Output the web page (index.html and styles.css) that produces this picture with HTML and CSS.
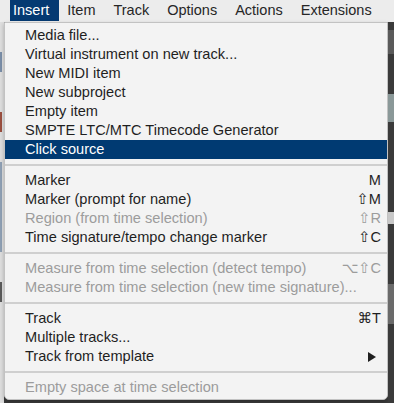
FILE: index.html
```html
<!DOCTYPE html>
<html lang="en">
	<head>
		<meta charset="UTF-8" />
		<meta name="viewport" content="width=device-width, initial-scale=1.0" />
		<title>Insert menu</title>
		<link rel="stylesheet" href="styles.css">
	</head>
	<body>
		<div class="menubar">
			<a href="javascript:;" class="top current-top">Insert</a>
			<a href="javascript:;" class="top">Item</a>
			<a href="javascript:;" class="top">Track</a>
			<a href="javascript:;" class="top">Options</a>
			<a href="javascript:;" class="top">Actions</a>
			<a href="javascript:;" class="top">Extensions</a>
		</div>

		<div class="stage">
			<div class="edge-left">
				<span class="tile t1"></span>
				<span class="tile t2"></span>
				<span class="tile t3"></span>
				<span class="tile t4"></span>
			</div>

			<ul class="menu">
				<li class="item"><span class="label">Media file...</span></li>
				<li class="item"><span class="label">Virtual instrument on new track...</span></li>
				<li class="item"><span class="label">New MIDI item</span></li>
				<li class="item"><span class="label">New subproject</span></li>
				<li class="item"><span class="label">Empty item</span></li>
				<li class="item"><span class="label">SMPTE LTC/MTC Timecode Generator</span></li>
				<li class="item selected"><span class="label">Click source</span></li>
				<li class="sep"></li>
				<li class="item"><span class="label">Marker</span><span class="key">M</span></li>
				<li class="item"><span class="label">Marker (prompt for name)</span><span class="key">⇧M</span></li>
				<li class="item disabled"><span class="label">Region (from time selection)</span><span class="key">⇧R</span></li>
				<li class="item"><span class="label">Time signature/tempo change marker</span><span class="key">⇧C</span></li>
				<li class="sep"></li>
				<li class="item disabled"><span class="label">Measure from time selection (detect tempo)</span><span class="key">⌥⇧C</span></li>
				<li class="item disabled"><span class="label">Measure from time selection (new time signature)...</span></li>
				<li class="sep"></li>
				<li class="item"><span class="label">Track</span><span class="key">⌘T</span></li>
				<li class="item"><span class="label">Multiple tracks...</span></li>
				<li class="item"><span class="label">Track from template</span><span class="arrow"></span></li>
				<li class="sep"></li>
				<li class="item disabled"><span class="label">Empty space at time selection</span></li>
			</ul>

			<div class="edge-right">
				<span class="block b1"></span>
				<span class="block b2"></span>
				<span class="block b3"></span>
				<span class="block b4"></span>
			</div>
		</div>
	</body>
</html>
```

FILE: styles.css
```css
* {
	margin: 0;
	padding: 0;
	box-sizing: border-box;
}

body {
	width: 394px;
	height: 403px;
	overflow: hidden;
	background-color: #3b3b3b;
	font-family: "Liberation Sans", Arial, "DejaVu Sans", sans-serif;
	font-size: 14.6px;
	color: #1f1f1f;
}

a {
	text-decoration: none;
	color: inherit;
}

.menubar {
	display: flex;
	gap: 5px;
	height: 22px;
	padding-left: 10px;
	background-color: #ececec;
	font-size: 14.5px;
}

.menubar .top {
	display: block;
	height: 21px;
	line-height: 21px;
	padding: 0 10px 0 3px;
	color: #262626;
}

.menubar .current-top {
	background-color: #053a72;
	color: #fff;
}

.stage {
	display: flex;
	height: 381px;
}

.edge-left {
	display: flex;
	flex-direction: column;
	width: 4px;
	background-color: #dedede;
}

.edge-left .tile {
	display: block;
	height: 20px;
	margin-top: 30px;
	border-left: 2px solid #7a8ea8;
}

.edge-left .t2 {
	border-color: #9b4f3f;
	margin-top: 40px;
}

.edge-left .t3 {
	height: 90px;
	border-color: #8fa0b5;
}

.edge-left .t4 {
	border-color: #5a5a5a;
}

.menu {
	list-style-type: none;
	width: 384px;
	height: 378px;
	padding: 3px 0 2px;
	background-color: #f3f3f3;
	border: 1px solid #c2c2c2;
	border-radius: 0 0 5px 5px;
	box-shadow: 0 2px 4px rgba(0, 0, 0, 0.25);
}

.menu .item {
	display: flex;
	align-items: center;
	height: 19px;
	line-height: 19px;
	padding: 0 6px 0 20px;
	white-space: nowrap;
}

.menu .item .label {
	flex: 1;
}

.menu .item .key {
	text-align: right;
}

.menu .selected {
	background-color: #003a72;
	color: #fff;
}

.menu .disabled {
	color: #9c9c9c;
}

.menu .sep {
	height: 2px;
	margin: 5px 0;
	background-color: #cfcfcf;
}

.menu .arrow {
	width: 0;
	height: 0;
	margin-right: 5px;
	border-top: 5px solid transparent;
	border-bottom: 5px solid transparent;
	border-left: 8px solid #1f1f1f;
}

.edge-right {
	display: flex;
	flex-direction: column;
	flex: 1;
	background-color: #3a3a3a;
}

.edge-right .block {
	display: block;
	height: 24px;
	margin-top: 8px;
	background-color: #5a5a5a;
}

.edge-right .b2 {
	height: 28px;
	margin-top: 40px;
	background-color: #8a9898;
}

.edge-right .b3 {
	height: 12px;
	margin-top: 90px;
	background-color: #c8c8c8;
}

.edge-right .b4 {
	height: 40px;
	margin-top: 60px;
	background-color: #6a6a6a;
}
```
